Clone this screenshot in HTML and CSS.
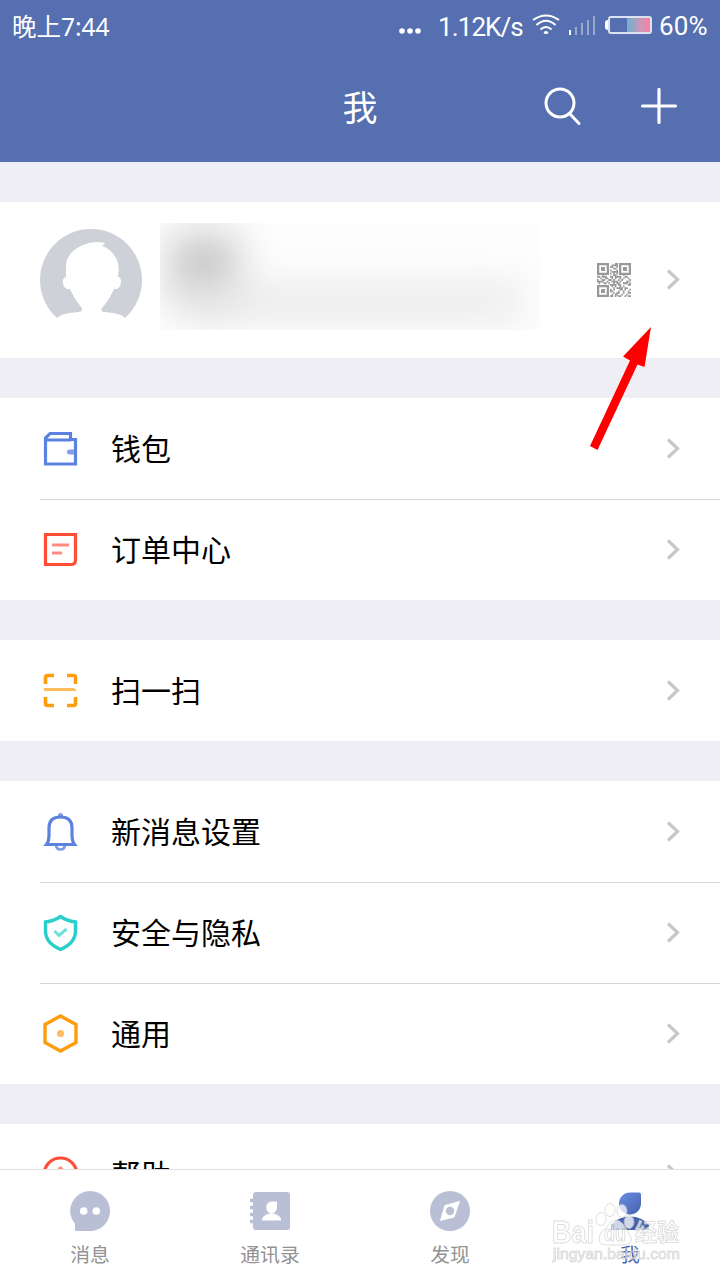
FILE: index.html
```html
<!DOCTYPE html>
<html lang="zh-CN">
<head>
<meta charset="utf-8">
<title>我</title>
<link rel="stylesheet" href="styles.css">
</head>
<body>
<svg class="defs" width="0" height="0">
  <symbol id="chevron" viewBox="0 0 14 22"><path d="M2 1.500L11.500 10.500L2 19.500" fill="none" stroke="#c7c7cb" stroke-width="3.200"/></symbol>
</svg>
<div class="screen">
  <header class="header">
    <div class="status">
      <span class="time">晚上7:44</span>
      <div class="status-right">
        <svg class="dots" width="22" height="8" viewBox="0 0 22 8" fill="#fff"><circle cx="3" cy="4" r="2.800"/><circle cx="11" cy="4" r="2.800"/><circle cx="19" cy="4" r="2.800"/></svg>
        <span class="speed">1.12K/s</span>
        <svg class="wifi" width="28" height="22" viewBox="0 0 28 22" fill="none" stroke="#fff" stroke-width="2"><path d="M1 6Q14-3 27 6M4.500 11Q14 2.500 23.500 11M8.500 15.500Q14 10.500 19.500 15.500"/><ellipse cx="14" cy="18.500" rx="2.200" ry="1.600" fill="#fff" stroke="none"/></svg>
        <svg class="signal" width="27" height="20" viewBox="0 0 27 20" fill="#fff"><path d="M0 14h2v5H0z"/><path opacity=".4" d="M6 11h2v8H6zM12 7h2v12h-2zM18 4h2v15h-2zM24 0h2v19h-2z"/></svg>
        <svg class="battery" width="48" height="18" viewBox="0 0 48 18"><defs><linearGradient id="charge"><stop offset="0" stop-color="#6bb2cc"/><stop offset=".55" stop-color="#c69abb"/><stop offset="1" stop-color="#ff7d9f"/></linearGradient></defs><path d="M3 4Q0 4 0 7v4q0 3 3 3z" fill="#fff"/><rect x="4" y="1" width="42" height="16" rx="2" fill="none" stroke="#dce2ef" stroke-width="2"/><path d="M22 2h23v14H22z" fill="url(#charge)"/></svg>
        <span class="percent">60%</span>
      </div>
    </div>
    <div class="nav">
      <h1>我</h1>
      <div class="actions">
        <svg width="40" height="40" viewBox="0 0 40 40" fill="none" stroke="#fff" stroke-width="3" stroke-linecap="round"><circle cx="17" cy="16" r="14"/><path d="M27 27L36 36.500"/></svg>
        <svg width="38" height="38" viewBox="0 0 38 38" fill="none" stroke="#fff" stroke-width="3.200" stroke-linecap="round"><path d="M19 1.500v33M2.500 18h33"/></svg>
      </div>
    </div>
  </header>

  <main class="content">
    <section class="profile">
      <svg class="avatar" width="102" height="102" viewBox="0 0 102 102"><path fill="#ced2d8" d="M17 89A51 51 0 1 1 85 89C82 85 73 84 65 83Q60 83 62 79Q69 71 74 60Q80 61 81 53Q81 48 78 48Q80 36 76 29Q71 20 62 17L65 14Q54 11 43 16Q27 23 26 36V48Q22 49 23 54Q24 61 30 60Q35 71 42 79Q43 83 38 83C28 84 21 85 17 89Z"/></svg>
      <div class="masked"></div>
      <svg class="qr" width="34" height="34" viewBox="0 0 21 21">
        <path fill="none" stroke="#999" stroke-width="1.400" d="M.7.7h6v6h-6zM14.300.7h6v6h-6zM.7 14.300h6v6h-6z"/>
        <path fill="none" stroke="#999" stroke-width="1.100" d="M11 .5h2M9 1.500h4M8 2.500h2m2 0h1M10 3.500h2M8 4.500h1m3 0h1M9 5.500h4M8 6.500h1m1 0h1m1 0h1M3 7.500h1m6 0h2m4 0h1M0 8.500h2m1 0h3m2 0h2m1 0h4m2 0h2M2 9.500h1m2 0h2m2 0h1m1 0h1m2 0h1m1 0h1m2 0h1M0 10.500h1m2 0h2m2 0h2m1 0h1m2 0h1m1 0h1m4 0h1M0 11.500h4m2 0h1m2 0h4m1 0h1m3 0h2M1 12.500h1m2 0h2m1 0h1m2 0h1m1 0h2m2 0h3m1 0h1M8 13.500h4m1 0h2m4 0h2M9 14.500h1m1 0h1m2 0h1m1 0h1M10 15.500h1m1 0h4m1 0h2M8 16.500h1m1 0h1m3 0h2m1 0h1m2 0h1M8 17.500h2m3 0h1m2 0h1m2 0h1M10 18.500h1m1 0h2m2 0h1m2 0h2M9 19.500h1m1 0h2m2 0h1m2 0h1M8 20.500h2m1 0h1m1 0h2m2 0h1m1 0h2"/>
        <path fill="#999" d="M2.500 2.500h2.400v2.400H2.500zM16.100 2.500h2.400v2.400h-2.400zM2.500 16.100h2.400v2.400H2.500z"/>
      </svg>
      <svg class="chevron"><use href="#chevron"/></svg>
    </section>

    <section class="group">
      <div class="row">
        <svg class="icon" viewBox="0 0 40 40" fill="none"><path d="M5.500 36V10L10 5.500h20.500v6h5v24.500h-30V12H31" stroke="#5c82e0" stroke-width="3.200"/><path d="M34 21.500h-4.500a2.500 2.500 0 0 0 0 5H34z" fill="#839fe8"/></svg>
        <span class="label">钱包</span><svg class="chevron"><use href="#chevron"/></svg>
      </div>
      <div class="row">
        <svg class="icon" viewBox="0 0 40 40" fill="none"><path d="M5.500 5.500h30V31q0 4.500-4.500 4.500H5.500z" stroke="#ff4d37" stroke-width="3.200"/><path d="M12 16h17M12 24h10" stroke="#ff8c7e" stroke-width="3"/></svg>
        <span class="label">订单中心</span><svg class="chevron"><use href="#chevron"/></svg>
      </div>
    </section>

    <section class="group">
      <div class="row">
        <svg class="icon" viewBox="0 0 40 40" fill="none"><path d="M5.500 14V7.500q0-2 2-2H14M27 5.500h6.500q2 0 2 2V14M5.500 27v6.500q0 2 2 2H14M27 35.500h6.500q2 0 2-2V27" stroke="#ff9c0a" stroke-width="3.600"/><path d="M4 18h30l3 3H4z" fill="#ffbc5c"/></svg>
        <span class="label">扫一扫</span><svg class="chevron"><use href="#chevron"/></svg>
      </div>
    </section>

    <section class="group">
      <div class="row">
        <svg class="icon" viewBox="0 0 40 40" fill="none"><circle cx="20.500" cy="4.500" r="2.500" fill="#7d9ae8"/><path d="M16 34q.5 4.500 4.500 4.500t4.500-4.500" stroke="#7d9ae8" stroke-width="2.500"/><path d="M6.500 33.500q2.500-3 2.500-10V17q0-11 11.500-11T32 17v6.500q0 7 2.500 10z" stroke="#5c82e0" stroke-width="3.200"/></svg>
        <span class="label">新消息设置</span><svg class="chevron"><use href="#chevron"/></svg>
      </div>
      <div class="row">
        <svg class="icon" viewBox="0 0 40 40" fill="none"><path d="M20.500 4.500Q27 9 35.500 10v9q0 12-15 18.500Q5.500 31 5.500 19v-9Q14 9 20.500 4.500z" stroke="#28cfcb" stroke-width="3.400"/><path d="M14.500 19l4.500 4.500L26.500 17" stroke="#70dfdb" stroke-width="3"/></svg>
        <span class="label">安全与隐私</span><svg class="chevron"><use href="#chevron"/></svg>
      </div>
      <div class="row">
        <svg class="icon" viewBox="0 0 40 40" fill="none"><path d="M20.500 3L36 11.500v18L20.500 38 5 29.500v-18z" stroke="#ff9c0a" stroke-width="3.400"/><circle cx="20.500" cy="20.500" r="3.500" fill="#ffbc5c"/></svg>
        <span class="label">通用</span><svg class="chevron"><use href="#chevron"/></svg>
      </div>
    </section>

    <section class="group">
      <div class="row">
        <svg class="icon" viewBox="0 0 40 40" fill="none"><circle cx="20.500" cy="20.500" r="16.500" stroke="#ff4d37" stroke-width="3.200"/><circle cx="20.500" cy="15" r="2.500" fill="#ff8c7e"/><path d="M20.500 19v9" stroke="#ff8c7e" stroke-width="3"/></svg>
        <span class="label">帮助</span><svg class="chevron"><use href="#chevron"/></svg>
      </div>
    </section>
  </main>

  <nav class="tabs">
    <div class="tab">
      <svg width="40" height="40" viewBox="0 0 40 40"><path d="M20 0a20 20 0 0 1 0 40H6q-1 0-1-1v-6A20 20 0 0 1 20 0z" fill="#b9bfd4"/><circle cx="13.700" cy="20" r="3.800" fill="#fff"/><circle cx="26.300" cy="20" r="3.800" fill="#fff"/></svg>
      <span>消息</span>
    </div>
    <div class="tab">
      <svg width="40" height="40" viewBox="0 0 40 40"><rect x="3" y="1" width="37" height="38" rx="3" fill="#b9bfd4"/><path d="M4 9.500H0M4 16.500H0M4 23.500H0M4 30.500H0" stroke="#b9bfd4" stroke-width="3.500"/><path d="M22 10.500h5V16a5.400 6 0 1 1-5-5.500zM12 29.500v-2q3-5 9.500-5t9.500 5v2z" fill="#fff"/></svg>
      <span>通讯录</span>
    </div>
    <div class="tab">
      <svg width="40" height="40" viewBox="0 0 40 40"><circle cx="20" cy="20" r="20" fill="#b9bfd4"/><path d="M29.500 10.500L24 26 10.500 29.500 15 14.500z" fill="#fff" stroke="#fff" stroke-linejoin="round"/><circle cx="20" cy="20" r="4.200" fill="#b9bfd4"/></svg>
      <span>发现</span>
    </div>
    <div class="tab active">
      <svg width="40" height="40" viewBox="0 0 40 40"><defs><linearGradient id="person" x1="0" y1="0" x2="1" y2="1"><stop stop-color="#6a8ee5"/><stop offset="1" stop-color="#4561aa"/></linearGradient></defs><path d="M20 1.500h9q2 0 2 2V12a11 11 0 1 1-11-10.500z" fill="url(#person)"/><path d="M1 39v-5q7-8.500 19-8.500T39 34v5z" fill="#4561aa"/></svg>
      <span>我</span>
    </div>
  </nav>

  <svg class="watermark" width="140" height="70" viewBox="0 0 140 70">
    <g class="paw"><ellipse cx="51" cy="25" rx="5" ry="6.500"/><ellipse cx="60" cy="16" rx="5" ry="6.500"/><ellipse cx="72" cy="17" rx="5" ry="6.500"/><ellipse cx="79" cy="28" rx="5" ry="6.500"/><path d="M66 26q5 0 9 7t6 10q2 8-8 8H56q-10-1-6-10 1-4 6-7 5-8 10-8z"/></g>
    <text class="brand" x="2" y="49" textLength="42" lengthAdjust="spacingAndGlyphs">Bai</text>
    <text class="brand small" x="54" y="47" textLength="22" lengthAdjust="spacingAndGlyphs">du</text>
    <text class="brand cn" x="85" y="47" textLength="44" lengthAdjust="spacingAndGlyphs">经验</text>
    <text class="url" x="3" y="65" textLength="127" lengthAdjust="spacingAndGlyphs">jingyan.baidu.com</text>
  </svg>
  <svg class="arrow" width="62" height="124" viewBox="0 0 62 124"><path d="M61 0L54.500 40 47.500 37.500 7.500 123 0 119 40 33.500 33 29.500z" fill="#f00"/></svg>
</div>
</body>
</html>
```
FILE: styles.css
```css
* { box-sizing: border-box; }
body { margin: 0; font-family: "Noto Sans CJK SC", sans-serif; background: #efeef4; }
svg { display: block; flex: none; }
.defs { position: absolute; }
.screen { position: relative; width: 720px; height: 1280px; overflow: hidden; display: flex; flex-direction: column; }

.header { height: 162px; flex: none; background: #556fb0; color: #fff; }
.status { height: 52px; padding: 0 12px; display: flex; justify-content: space-between; align-items: center; line-height: 52px; }
.time { padding-top: 1px; font-size: 24.5px; font-family: "Noto Sans", "Noto Sans CJK SC", sans-serif; }
.status-right { display: flex; align-items: center; font-family: Roboto, sans-serif; font-size: 26px; }
.dots { margin: 9px 17px 0 0; }
.speed { width: 85px; margin-right: 9px; padding-top: 2px; letter-spacing: -.9px; white-space: nowrap; }
.wifi { margin: -2px 9px 0 0; }
.signal { margin-right: 9px; }
.battery { margin: -2px 6px 0 0; }
.percent { width: 49px; letter-spacing: .2px; white-space: nowrap; }

.nav { height: 110px; display: grid; grid-template-columns: 1fr auto 1fr; align-items: center; }
.nav h1 { grid-column: 2; margin: -2px 0 0; font-size: 35px; font-weight: 400; line-height: 108px; }
.actions { display: flex; justify-content: flex-end; align-items: center; gap: 57px; padding-right: 42px; }

.content { flex: 1; min-height: 0; overflow: hidden; padding-top: 40px; display: flex; flex-direction: column; gap: 40px; }
.profile { height: 156px; flex: none; background: #fff; display: flex; align-items: center; padding: 0 40px; }
.avatar { margin-top: -1px; }
.masked { position: relative; overflow: hidden; width: 380px; height: 107px; margin: -8px 57px 0 18px; background: #fdfdfd; }
.masked::before, .masked::after { content: ""; position: absolute; filter: blur(20px); }
.masked::before { left: 12px; top: 12px; width: 64px; height: 62px; background: #c4c4c4; }
.masked::after { left: 20px; top: 66px; width: 340px; height: 26px; background: #e2e2e2; }
.qr { margin-right: 35px; }
.chevron { width: 14px; height: 22px; }

.group { flex: none; background: #fff; padding-left: 40px; }
.row { height: 101px; display: flex; align-items: center; padding-right: 40px; }
.row + .row { border-top: 1px solid #d7d7d9; }
.icon { width: 40px; height: 40px; margin-top: -2px; }
.label { flex: 1; margin: -4px 0 0 31px; font-size: 30px; line-height: 44px; color: #000; }

.tabs { height: 111px; flex: none; display: flex; background: #fff; border-top: 1px solid #e0e0e2; }
.tab { flex: 1; display: flex; flex-direction: column; align-items: center; padding-top: 21px; font-size: 19.8px; line-height: 30px; color: #929292; }
.tab span { margin-top: 8px; }
.active { color: #4561aa; }

.watermark { position: absolute; left: 550px; top: 1194px; opacity: .75; fill: #fff; stroke: #d2d2d2; stroke-width: 1; }
.brand { font: 700 31px "Liberation Sans", sans-serif; }
.small { font-size: 22px; }
.cn { font: 700 24px "Noto Sans CJK SC", sans-serif; }
.url { font: 400 15px "Liberation Sans", sans-serif; }
.arrow { position: absolute; left: 590px; top: 327px; }
```
